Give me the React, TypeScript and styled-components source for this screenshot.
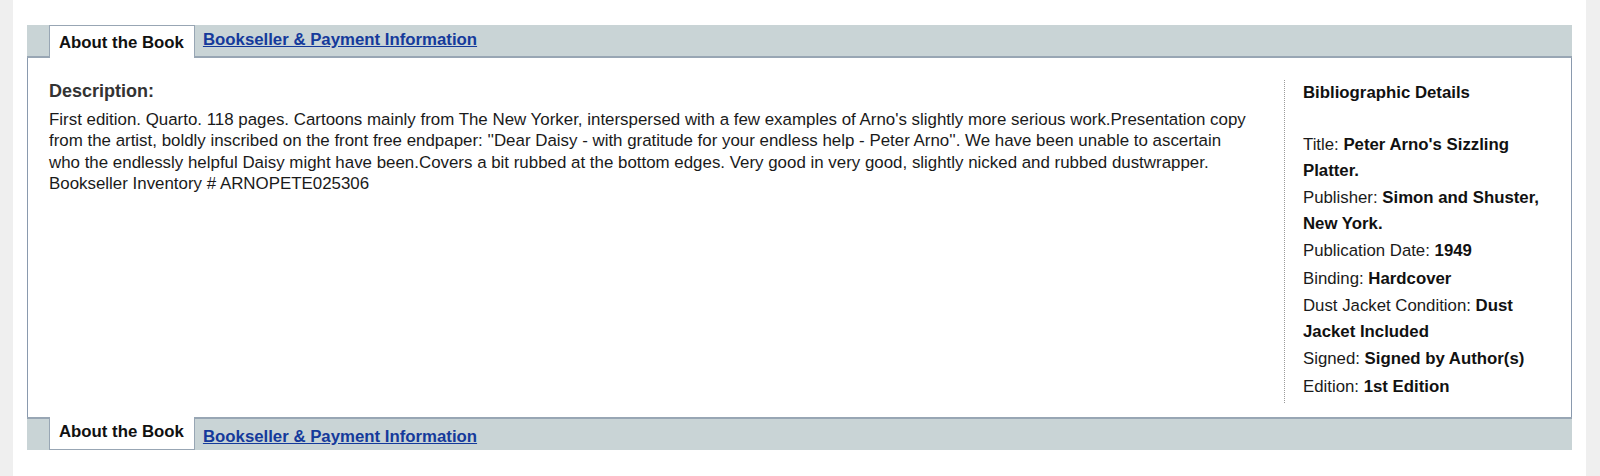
import React from "react";
import styled, { createGlobalStyle } from "styled-components";

const GlobalStyle = createGlobalStyle`
  html, body {
    margin: 0;
    padding: 0;
    background: #efefef;
  }
  body {
    font-family: "Liberation Sans", Arial, Helvetica, sans-serif;
    color: #1a1a1a;
  }
`;

const Page = styled.div`
  box-sizing: border-box;
  margin: 0 14px 0 13px;
  height: 476px;
  background: #ffffff;
  padding: 25px 14px 26px;
`;

const TabBar = styled.div<{ $side: "top" | "bottom" }>`
  display: flex;
  align-items: ${(p) => (p.$side === "top" ? "flex-end" : "flex-start")};
  height: 31px;
  padding-left: 22px;
  background: #c9d4d6;
  ${(p) =>
    p.$side === "top"
      ? "border-bottom: 2px solid #98a6b4;"
      : "border-top: 2px solid #98a6b4;"}
`;

const ActiveTab = styled.div<{ $side: "top" | "bottom" }>`
  box-sizing: border-box;
  height: 33px;
  padding: ${(p) => (p.$side === "top" ? "7px 10px 0 9px" : "5px 10px 0 9px")};
  background: #ffffff;
  border: 1px solid #98a6b4;
  ${(p) => (p.$side === "top" ? "border-bottom: none; margin-bottom: -2px;" : "border-top: none; margin-top: -2px;")}
  font-size: 16.8px;
  line-height: 20px;
  font-weight: bold;
  color: #111;
  white-space: nowrap;
`;

const LinkTab = styled.a<{ $side: "top" | "bottom" }>`
  align-self: stretch;
  padding: ${(p) => (p.$side === "top" ? "5px 8px 0 8px" : "8px 8px 0 8px")};
  font-size: 16.8px;
  line-height: 20px;
  font-weight: bold;
  color: #153a9b;
  text-decoration: underline;
  white-space: nowrap;
  cursor: pointer;
`;

const Panel = styled.div`
  display: flex;
  align-items: stretch;
  box-sizing: border-box;
  height: 359px;
  padding: 22px 18px 14px 21px;
  border-left: 1px solid #8a9aae;
  border-right: 1px solid #8a9aae;
  background: #ffffff;
`;

const Description = styled.div`
  flex: 1;
  padding-right: 29px;
`;

const DescHeading = styled.h3`
  margin: 0 0 7px;
  font-size: 18px;
  line-height: 22px;
  font-weight: bold;
  color: #333;
`;

const DescText = styled.p`
  margin: 0;
  font-size: 16.9px;
  line-height: 21.4px;
  color: #1a1a1a;
`;

const Sidebar = styled.div`
  flex: 0 0 250px;
  padding: 0 0 4px 18px;
  border-left: 1px dotted #9a9a9a;
`;

const SideHeading = styled.h4`
  margin: 0 0 27px;
  font-size: 16.8px;
  line-height: 25px;
  font-weight: bold;
  color: #111;
`;

const DetailList = styled.ul`
  list-style: none;
  margin: 0;
  padding: 0;
`;

const DetailItem = styled.li`
  margin: 0 0 2px;
  font-size: 16.8px;
  line-height: 25.5px;
  color: #1a1a1a;

  &:last-child {
    margin-bottom: 0;
  }

  b {
    color: #111;
  }
`;

const details: [string, string][] = [
  ["Title", "Peter Arno's Sizzling Platter."],
  ["Publisher", "Simon and Shuster, New York."],
  ["Publication Date", "1949"],
  ["Binding", "Hardcover"],
  ["Dust Jacket Condition", "Dust Jacket Included"],
  ["Signed", "Signed by Author(s)"],
  ["Edition", "1st Edition"],
];

function Tabs({ side }: { side: "top" | "bottom" }) {
  return (
    <TabBar $side={side}>
      <ActiveTab $side={side}>About the Book</ActiveTab>
      <LinkTab $side={side}>Bookseller &amp; Payment Information</LinkTab>
    </TabBar>
  );
}

function App() {
  return (
    <>
      <GlobalStyle />
      <Page>
        <Tabs side="top" />
        <Panel>
          <Description>
            <DescHeading>Description:</DescHeading>
            <DescText>
              First edition. Quarto. 118 pages. Cartoons mainly from The New
              Yorker, interspersed with a few examples of Arno's slightly more
              serious work.Presentation copy from the artist, boldly inscribed
              on the front free endpaper: ''Dear Daisy - with gratitude for your
              endless help - Peter Arno''. We have been unable to ascertain who
              the endlessly helpful Daisy might have been.Covers a bit rubbed at
              the bottom edges. Very good in very good, slightly nicked and
              rubbed dustwrapper.
              <br />
              Bookseller Inventory # ARNOPETE025306
            </DescText>
          </Description>
          <Sidebar>
            <SideHeading>Bibliographic Details</SideHeading>
            <DetailList>
              {details.map(([label, value]) => (
                <DetailItem key={label}>
                  {label}: <b>{value}</b>
                </DetailItem>
              ))}
            </DetailList>
          </Sidebar>
        </Panel>
        <Tabs side="bottom" />
      </Page>
    </>
  );
}

export default App;
